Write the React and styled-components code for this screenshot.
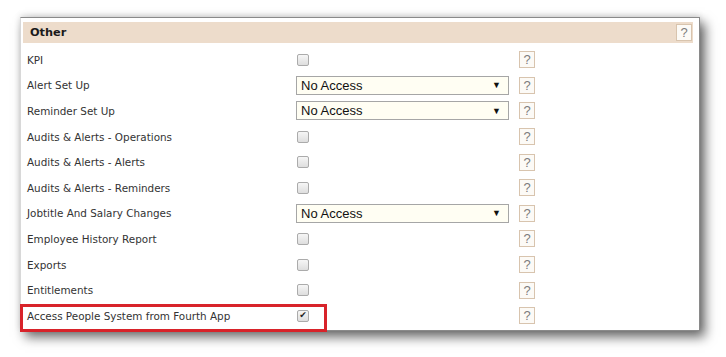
import React from "react";
import styled, { createGlobalStyle } from "styled-components";

const GlobalStyle = createGlobalStyle`
  body {
    margin: 0;
    background: #fff;
    font-family: "DejaVu Sans", Verdana, sans-serif;
  }
`;

const rows = [
  { label: "KPI", type: "check" },
  { label: "Alert Set Up", type: "select" },
  { label: "Reminder Set Up", type: "select" },
  { label: "Audits & Alerts - Operations", type: "check" },
  { label: "Audits & Alerts - Alerts", type: "check" },
  { label: "Audits & Alerts - Reminders", type: "check" },
  { label: "Jobtitle And Salary Changes", type: "select" },
  { label: "Employee History Report", type: "check" },
  { label: "Exports", type: "check" },
  { label: "Entitlements", type: "check" },
  { label: "Access People System from Fourth App", type: "check", checked: true, marked: true },
];

const App = () => {
  return (
    <>
      <GlobalStyle />
      <Page>
        <Panel>
          <Header>
            <HeaderTitle>Other</HeaderTitle>
            <Help>?</Help>
          </Header>
          <Rows>
            {rows.map((row) => (
              <Row key={row.label} $marked={row.marked}>
                <Label>{row.label}</Label>
                <Control>
                  {row.type === "select" ? (
                    <Select>
                      <span>No Access</span>
                      <Arrow>▼</Arrow>
                    </Select>
                  ) : (
                    <Check>{row.checked ? "✔" : ""}</Check>
                  )}
                </Control>
                <Help>?</Help>
              </Row>
            ))}
          </Rows>
        </Panel>
      </Page>
    </>
  );
};

export default App;

const Page = styled.div`
  width: 726px;
  height: 357px;
  padding: 17px 0 0 20px;
  box-sizing: border-box;
`;

const Panel = styled.div`
  width: 680px;
  height: 314px;
  box-sizing: border-box;
  border: 1px solid #8a8a8a;
  border-left-color: #d8d8d8;
  background: #fff;
  padding: 4px 6px 0 2px;
  box-shadow: 5px 6px 11px rgba(0, 0, 0, 0.6), 0 -2px 6px rgba(0, 0, 0, 0.12);
`;

const Header = styled.div`
  height: 21px;
  background: #eddccb;
  display: flex;
  align-items: center;
  justify-content: space-between;
  padding: 0 1px 0 7px;
  margin-bottom: 4px;
`;

const HeaderTitle = styled.div`
  font-weight: bold;
  font-size: 11.3px;
  color: #1a1a1a;
`;

const Rows = styled.div`
  display: flex;
  flex-direction: column;
`;

const Row = styled.div`
  position: relative;
  height: 25.6px;
  display: grid;
  grid-template-columns: 273px 223px 1fr;
  align-items: center;

  &::after {
    content: "";
    display: ${(p) => (p.$marked ? "block" : "none")};
    position: absolute;
    left: -3px;
    top: 1px;
    width: 307px;
    height: 28px;
    box-sizing: border-box;
    border: 3px solid #d8232a;
  }
`;

const Label = styled.div`
  padding-left: 4px;
  font-size: 10.4px;
  color: #333;
  white-space: nowrap;
`;

const Control = styled.div`
  display: flex;
  align-items: center;
`;

const Check = styled.span`
  width: 12px;
  height: 12px;
  margin-left: 1px;
  box-sizing: border-box;
  border: 1px solid #ababab;
  border-radius: 2px;
  background: linear-gradient(#f6f6f6, #dedede);
  display: flex;
  align-items: center;
  justify-content: center;
  font-size: 9px;
  line-height: 1;
  color: #222;
`;

const Select = styled.div`
  width: 213px;
  height: 19px;
  box-sizing: border-box;
  border: 1px solid #a6a6a6;
  background: #fffef3;
  display: flex;
  align-items: center;
  justify-content: space-between;
  padding: 0 7px 0 4px;
  font-family: "Liberation Sans", Arial, sans-serif;
  font-size: 13px;
  color: #111;
`;

const Arrow = styled.span`
  font-size: 9px;
  color: #111;
`;

const Help = styled.span`
  width: 16px;
  height: 17px;
  box-sizing: border-box;
  border: 1px solid #d8c4ae;
  background: #fcfaf6;
  display: flex;
  align-items: center;
  justify-content: center;
  font-family: "Liberation Sans", Arial, sans-serif;
  font-size: 13px;
  color: #7d7d7d;
`;
